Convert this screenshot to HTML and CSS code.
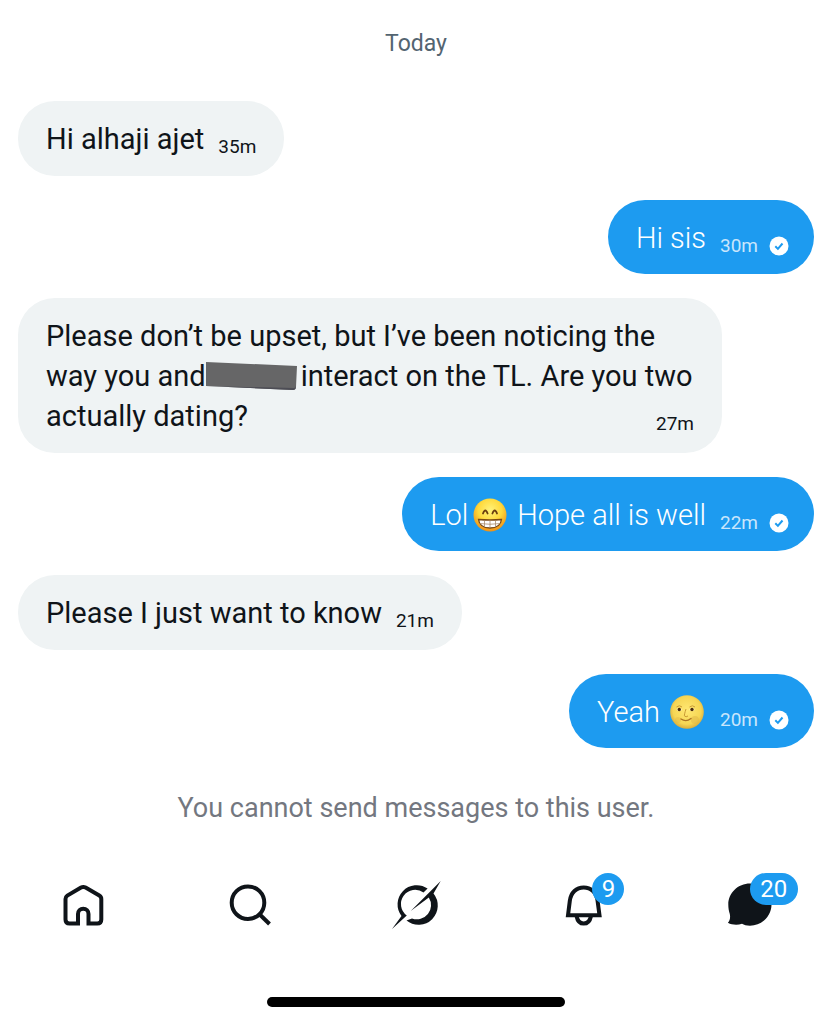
FILE: index.html
```html
<!DOCTYPE html>
<html lang="en">
<head>
  <meta charset="UTF-8" />
  <meta name="viewport" content="width=device-width, initial-scale=1.0"/>
  <title>Messages</title>
  <link rel="stylesheet" href="styles.css">
</head>
<body>

  <main class="chat">
    <h1 class="day">Today</h1>

    <div class="bubble received">
      <p>Hi alhaji ajet</p>
      <span class="meta">35m</span>
    </div>

    <div class="bubble sent">
      <p>Hi sis</p>
      <span class="meta">30m
        <svg class="check" viewBox="0 0 20 20"><circle cx="10" cy="10" r="9.5"/><path d="M6.3 10.3l2.6 2.6 4.6-5.4"/></svg>
      </span>
    </div>

    <div class="bubble received long">
      <p>Please don’t be upset, but I’ve been noticing the way you and<svg class="redacted" viewBox="0 0 92 28"><path d="M0 0L91 4L90 25Q90 28 87 28L0 24Z"/><path class="edge" d="M0 24L88 26Q90 26 90 24Q90 28 87 28Z"/></svg>interact on the TL. Are you two actually dating?
      <span class="meta">27m</span></p>
    </div>

    <div class="bubble sent">
      <p>Lol<svg class="emoji grin" viewBox="0 0 34 34" role="img" aria-label="grinning face">
        <defs>
          <radialGradient id="face" cx="50%" cy="35%" r="65%">
            <stop offset="0" stop-color="#fff27a"/>
            <stop offset="0.55" stop-color="#ffd93b"/>
            <stop offset="1" stop-color="#ee8f16"/>
          </radialGradient>
        </defs>
        <circle cx="17" cy="17" r="16.5" fill="url(#face)"/>
        <path d="M10 15.5Q12.3 9.5 14.6 15.5M19.400 15.500Q21.700 9.500 24 15.500" fill="none" stroke="#6b3f10" stroke-width="1.8" stroke-linecap="round"/>
        <path d="M5.5 21.5Q17 22.5 28.5 21.5Q27.5 30 17 30Q6.5 30 5.5 21.5Z" fill="#fff" stroke="#7b4a17" stroke-width="1.3"/>
        <path d="M6.5 25.5Q17 27 27.5 25.5M11.5 22.5V29M17 22.5V30M22.5 22.5V29" fill="none" stroke="#a98b6c" stroke-width="0.8"/>
      </svg>Hope all is well</p>
      <span class="meta">22m
        <svg class="check" viewBox="0 0 20 20"><circle cx="10" cy="10" r="9.5"/><path d="M6.3 10.3l2.6 2.6 4.6-5.4"/></svg>
      </span>
    </div>

    <div class="bubble received">
      <p>Please I just want to know</p>
      <span class="meta">21m</span>
    </div>

    <div class="bubble sent">
      <p>Yeah<svg class="emoji moon" viewBox="0 0 34 34" role="img" aria-label="full moon face">
        <defs>
          <radialGradient id="moon" cx="50%" cy="45%" r="55%">
            <stop offset="0" stop-color="#ffe873"/>
            <stop offset="0.75" stop-color="#f6d654"/>
            <stop offset="1" stop-color="#d9ad3c"/>
          </radialGradient>
        </defs>
        <circle cx="17" cy="17" r="16.8" fill="url(#moon)"/>
        <circle cx="25" cy="25" r="4" fill="#dfb646" opacity="0.5"/>
        <circle cx="8" cy="25" r="3" fill="#dfb646" opacity="0.4"/>
        <path d="M6.5 12Q9.5 9.500 12 12M19.5 12Q22.5 9.5 25 12M16 14Q14 20 14.5 21Q16 22.5 18 21" fill="none" stroke="#c99a35" stroke-width="1"/>
        <ellipse cx="9.3" cy="14.5" rx="2.6" ry="1.6" fill="#fff3bd"/>
        <ellipse cx="22" cy="14.5" rx="2.6" ry="1.6" fill="#fff3bd"/>
        <circle cx="9.3" cy="14.5" r="1.7" fill="#4a2a0c"/>
        <circle cx="22" cy="14.5" r="1.7" fill="#4a2a0c"/>
        <path d="M11 24Q16 27.5 21 23.5" fill="none" stroke="#ab7424" stroke-width="1.4" stroke-linecap="round"/>
      </svg></p>
      <span class="meta">20m
        <svg class="check" viewBox="0 0 20 20"><circle cx="10" cy="10" r="9.5"/><path d="M6.3 10.3l2.6 2.6 4.6-5.4"/></svg>
      </span>
    </div>

    <p class="notice">You cannot send messages to this user.</p>
  </main>

  <nav class="tabs">
    <a href="#home" aria-label="Home">
      <svg viewBox="0 0 48 48"><path class="line" d="M19 42.5H10.5Q6.5 42.5 6.5 38.5V18Q6.5 15.8 8.3 14.6L22 6.6Q24.3 5.4 26.6 6.6L40.3 14.6Q42.3 15.8 42.3 18V38.5Q42.3 42.5 38.3 42.5H29.5V33a5.2 5.2 0 0 0-10.5 0Z"/></svg>
    </a>
    <a href="#search" aria-label="Search">
      <svg viewBox="0 0 48 48"><circle class="line" cx="22" cy="21.7" r="16.3"/><path class="line" d="M33.5 33.3L43.5 43"/></svg>
    </a>
    <a href="#grok" aria-label="Grok">
      <svg viewBox="0 0 48 48">
        <path d="M35.6 7.5A19.2 19.2 0 0 0 9.5 35L0 48L14.8 34.5A14.2 14.2 0 0 1 31.500 11.500Z"/>
        <path d="M48.7 0L18.7 30L36.8 16.5A14.2 14.2 0 0 1 20 37.5L14.5 39.5A19.2 19.2 0 0 0 41.5 12.500Z"/>
      </svg>
    </a>
    <a href="#notifications" aria-label="Notifications">
      <svg viewBox="0 0 48 48"><path class="line" d="M10 34.3L11.8 20C12.8 11.5 18.5 6.4 25.7 6.4S38.6 11.5 39.6 20L41.5 34.3Z"/><path class="line" d="M18.5 35C19.5 40 22 42.6 25.7 42.6S32 40 33 35"/></svg>
      <span class="badge">9</span>
    </a>
    <a href="#messages" aria-label="Messages">
      <svg viewBox="0 0 48 48"><path d="M25 2.5C37 2.5 46.5 12 46.5 23.5S37 44.7 25 44.7C21.500 44.700 19 44 17 42.800C12.500 44.200 7 44 2.900 41.700C5 39.500 5.500 36.500 4.800 33C3.800 30 3.300 27 3.300 23.500C3.300 12 13 2.500 25 2.500Z"/></svg>
      <span class="badge wide">20</span>
    </a>
  </nav>

  <div class="home-bar"></div>

</body>
</html>
```
FILE: styles.css
```css
* {
  box-sizing: border-box;
}

body {
  margin: 0;
  min-height: 100vh;
  font-family: Roboto, "Liberation Sans", sans-serif;
  background: #fff;
  color: #0f1419;
}

p {
  margin: 0;
}

.chat {
  display: flex;
  flex-direction: column;
  gap: 24px;
  padding: 30px 18px 0;
}

.day {
  margin: 0 0 19px;
  font-size: 23px;
  font-weight: 400;
  line-height: 28px;
  text-align: center;
  color: #536471;
}

.bubble {
  display: flex;
  align-items: flex-end;
  gap: 14px;
  font-size: 29px;
  line-height: 40px;
  border-radius: 37px;
}

.received {
  align-self: flex-start;
  padding: 18px 28px 17px;
  background: #eff3f4;
}

.sent {
  align-self: flex-end;
  padding: 18px 25px 16px 28px;
  background: #1d9bf0;
  color: #fff;
  font-weight: 300;
}

.long {
  max-width: 704px;
}

.meta {
  display: flex;
  align-items: center;
  gap: 11px;
  font-size: 19px;
  line-height: 24px;
}

.sent .meta {
  color: #c9e6fc;
  font-weight: 400;
}

.long .meta {
  float: right;
  margin-top: 16px;
}

.check {
  width: 20px;
  height: 20px;
}

.check circle {
  fill: #fff;
}

.check path {
  fill: none;
  stroke: #1d9bf0;
  stroke-width: 2;
}

.redacted {
  width: 92px;
  height: 28px;
  margin-right: 3px;
  vertical-align: -4px;
  fill: #666667;
}

.redacted .edge {
  fill: #4d4d55;
}

.emoji {
  width: 34px;
  height: 34px;
  vertical-align: -7px;
}

.grin {
  margin: 0 10px 0 5px;
}

.moon {
  margin: 0 2px 0 10px;
}

.notice {
  margin-top: 20px;
  font-size: 27px;
  line-height: 32px;
  text-align: center;
  color: #737780;
}

.tabs {
  display: flex;
  margin-top: 57px;
}

.tabs a {
  position: relative;
  flex: 1;
  display: flex;
  justify-content: center;
  color: #0f1419;
}

.tabs svg {
  width: 48px;
  height: 48px;
  fill: currentColor;
  overflow: visible;
}

.tabs .line {
  fill: none;
  stroke: currentColor;
  stroke-width: 4;
}

.badge {
  position: absolute;
  top: -8px;
  left: calc(50% + 10px);
  width: 32px;
  height: 32px;
  border-radius: 16px;
  background: #1d9bf0;
  color: #fff;
  font-size: 24px;
  line-height: 32px;
  text-align: center;
}

.badge.wide {
  left: calc(50% + 1px);
  width: 48px;
}

.home-bar {
  width: 298px;
  height: 10px;
  margin: 68px auto 16px;
  border-radius: 5px;
  background: #000;
}
```
